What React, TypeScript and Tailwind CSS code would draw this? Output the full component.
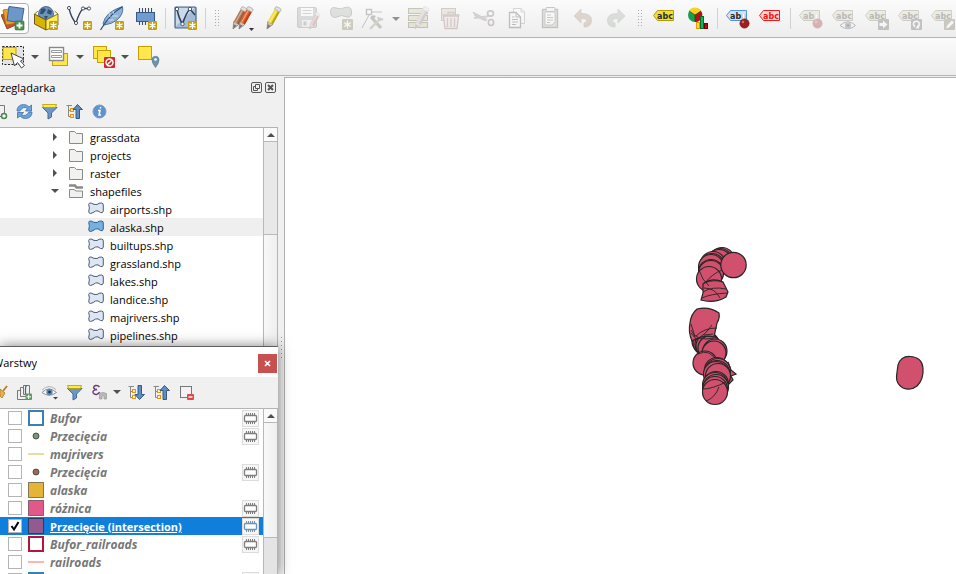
import React from "react";

type Kids = { children?: React.ReactNode };

/* ---------- shared pieces ---------- */

function Art({ children, faded = false }: Kids & { faded?: boolean }) {
  return (
    <svg width="25" height="25" viewBox="0 0 25 25" fill="none" className={faded ? "shrink-0 opacity-30" : "shrink-0"}>
      {children}
    </svg>
  );
}

function Tool({ label, faded, children }: Kids & { label: string; faded?: boolean }) {
  return (
    <button type="button" aria-label={label} disabled={faded} className="flex h-full w-[33px] shrink-0 items-center justify-center">
      <Art faded={faded}>{children}</Art>
    </button>
  );
}

function SmallTool({ label, children }: Kids & { label: string }) {
  return (
    <button type="button" aria-label={label} className="flex h-full w-[25px] shrink-0 items-center justify-center">
      <svg width="17" height="17" viewBox="0 0 17 17" fill="none" className="shrink-0">
        {children}
      </svg>
    </button>
  );
}

function Separator() {
  return (
    <div className="flex w-[7px] shrink-0 justify-center py-2">
      <div className="w-px bg-[#d2d2d2]" />
    </div>
  );
}

function Handle() {
  const rows = [0, 3, 6, 9, 12, 15];
  return (
    <div className="flex w-4 shrink-0 items-center justify-center">
      <svg width="5" height="17" fill="#a9a9a9">
        {rows.map((y) => (
          <g key={y}>
            <rect x="0" y={y} width="1" height="1" />
            <rect x="3" y={y} width="1" height="1" />
          </g>
        ))}
      </svg>
    </div>
  );
}

function DropArrow({ label, faded, className }: { label: string; faded?: boolean; className: string }) {
  return (
    <button type="button" aria-label={label} className={`flex h-full shrink-0 items-center justify-center ${className}`}>
      <svg width="8" height="4">
        <path d="M0 0H8L4 4Z" fill={faded ? "#909090" : "#505050"} />
      </svg>
    </button>
  );
}

function Star({ x = 15, y = 15, s = 1 }: { x?: number; y?: number; s?: number }) {
  return (
    <g transform={`translate(${x} ${y}) scale(${s})`}>
      <rect width="9" height="9" rx="1.3" fill="#c4a000" />
      <path d="M4.5 1V8M1.4 2.7L7.6 6.3M7.6 2.7L1.4 6.3" stroke="#fff" strokeWidth="1.3" />
    </g>
  );
}

function Pencil({ x, y, body, dark, tip = "#777" }: { x: number; y: number; body: string; dark: string; tip?: string }) {
  return (
    <g transform={`translate(${x} ${y}) rotate(29)`}>
      <path d="M0 0L-3 -7H3Z" fill="#d8c4a8" stroke="#777" strokeWidth=".6" />
      <path d="M0 0L-1.6 -4.5H1.6Z" fill={tip} />
      <rect x="-3" y="-21" width="6" height="14" fill={body} />
      <rect x="1" y="-21" width="2" height="14" fill={dark} />
      <path d="M-1 -21V-7" stroke="#fff" strokeOpacity=".45" />
      <path d="M-3 -21H3V-24Q0 -25 -3 -24Z" fill="#e2e2e2" stroke="#aaa" strokeWidth=".7" />
    </g>
  );
}

function Tag({ fill, stroke, color = "#2b2b2b", text = "abc" }: { fill: string; stroke: string; color?: string; text?: string }) {
  return (
    <g>
      <path d="M1.5 9.5L5.5 4.5H21.5V14.5H5.5Z" fill={fill} stroke={stroke} />
      <text x="5" y="12.5" fontSize="8" fontWeight="700" fontFamily="'DejaVu Sans', sans-serif" fill={color}>
        {text}
      </text>
    </g>
  );
}

function Ball() {
  return (
    <g>
      <path d="M18.5 8V14" stroke="#fff" strokeWidth="3.5" />
      <path d="M17 8V13M20 8V13" stroke="#999" strokeWidth=".7" />
      <circle cx="19.5" cy="17.5" r="4.6" fill="#9c2020" stroke="#7a1010" strokeWidth=".7" />
      <circle cx="18" cy="16" r="1.2" fill="#d47070" />
    </g>
  );
}

/* ---------- toolbars ---------- */

const V_LINE = "M2 2Q4 12 9 17Q12 7 16 2.5H22";

function MainToolbar() {
  const grey = { fill: "#d8d6a8", stroke: "#77755a" };
  return (
    <div role="toolbar" aria-label="Warstwy i edycja" className="flex h-[38px] overflow-hidden border-b border-[#b4b4b4] bg-linear-to-b from-[#fbfbfb] to-[#ededed]">
      <button type="button" aria-label="Zarządzanie źródłami danych" className="-ml-1 mr-px mt-[3px] flex h-[31px] w-[33px] shrink-0 items-center justify-end rounded-sm border border-[#b0b0b0] bg-white pr-[2px]">
        <Art>
          <path d="M0 9L10 5L17 18L6 23Z" fill="#c8522c" stroke="#8c3418" strokeWidth=".8" />
          <path d="M2 4L15 2L17 17L5 19Z" fill="#e8a02c" stroke="#a86c10" strokeWidth=".8" />
          <path d="M8 .5L23 2.5L20.5 17L6 14.5Z" fill="#6c97c8" stroke="#3a6496" />
          <rect x="14" y="15" width="9" height="9" rx="1" fill="#4f9150" stroke="#2f6a35" strokeWidth=".6" />
          <path d="M18.5 16.5V22.5M15.5 19.5H21.5" stroke="#fff" strokeWidth="1.8" />
        </Art>
      </button>
      <Tool label="Nowy GeoPackage">
        <circle cx="12" cy="8" r="7.5" fill="#6d93bd" stroke="#33587f" strokeWidth=".8" />
        <path d="M7 3Q11 1 12 4L9 8L6 8ZM14 3L18 5L17 9L13 7ZM10 10L14 10L12 14Z" fill="#2f5273" />
        <path d="M.5 8L12 14V24L.5 18Z" fill="#d9b300" stroke="#4a3e00" strokeWidth=".8" />
        <path d="M24 8L12 14V24L24 19Z" fill="#fcec54" stroke="#6a5a00" strokeWidth=".8" />
        <path d="M.5 8L4 5M24 8L20.5 5" stroke="#8f7a10" />
        <Star />
      </Tool>
      <Tool label="Nowa warstwa Shapefile">
        <path d={V_LINE} stroke="#35435a" strokeWidth="1.3" />
        {[[2, 2], [9, 17], [16, 2.5], [22, 2.5]].map(([x, y]) => (
          <circle key={x} cx={x} cy={y} r="1.6" fill="#fff" stroke="#35435a" strokeWidth=".9" />
        ))}
        <Star x={16} />
      </Tool>
      <Tool label="Nowa warstwa SpatiaLite">
        <path d="M3 18Q5 6 22.5 .5Q24 8 17 14Q12 18 4 19Z" fill="#8db3d9" stroke="#44698f" strokeWidth=".9" />
        <path d="M22 1Q10 8 .5 24" stroke="#2e5075" strokeWidth="1.2" />
        <path d="M9 7L10 11M13 5L14 8M8 14L14 14M12 10L18 10" stroke="#dbe9f6" strokeWidth=".8" />
        <Star />
      </Tool>
      <Tool label="Nowa tymczasowa warstwa">
        <path d="M6.5 2V19M9.5 2V19M12.5 2V19M15.5 2V19M18.5 2V19" stroke="#3c4f66" strokeWidth="1.1" />
        <rect x="3.5" y="6.5" width="18" height="9" fill="#6f9bd1" stroke="#345a8a" />
        <Star />
      </Tool>
      <Separator />
      <Tool label="Nowa warstwa wirtualna">
        <rect x="2" y="1" width="21" height="21" rx="1" fill="#a3bcd8" stroke="#44648a" strokeWidth="1.2" />
        <path d="M3 2H22L3 20Z" fill="#dbe6f2" fillOpacity=".7" />
        <path d="M4 3Q6 13 9.5 18Q13 7 17 3L22 9" stroke="#2f3e55" strokeWidth="1.5" />
        {[[4, 3], [9.5, 18], [17, 3]].map(([x, y]) => (
          <circle key={x} cx={x} cy={y} r="1.7" fill="#fff" stroke="#2f3e55" strokeWidth=".8" />
        ))}
        <Star />
      </Tool>
      <Separator />
      <Handle />
      <Tool label="Bieżące edycje">
        <Pencil x={4} y={23} body="#b5795a" dark="#8f5c42" />
        <Pencil x={10} y={23} body="#e8622c" dark="#b8431a" />
        <path d="M20 22H25L22.5 25Z" fill="#333" />
      </Tool>
      <Tool label="Tryb edycji">
        <Pencil x={5} y={23} body="#f2dc3c" dark="#b8a21c" />
      </Tool>
      <Tool label="Zapisz zmiany" faded>
        <rect x="2.5" y="1.5" width="19" height="20" rx="1.5" fill="#9a9fa3" stroke="#70757a" />
        <rect x="6" y="2" width="12" height="8" fill="#fff" />
        <path d="M7.5 4.5H16.5M7.5 7.5H16.5" stroke="#888" />
        <rect x="7" y="14" width="10" height="7" fill="#e8e8e8" />
        <rect x="8.5" y="15.5" width="3" height="4" fill="#777" />
        <g transform="translate(7 6) scale(.75)">
          <Pencil x={10} y={23} body="#c07a70" dark="#9a5a50" />
        </g>
      </Tool>
      <Tool label="Dodaj obiekt" faded>
        <path d="M2.5 6Q3 0 8 2Q13 4 17 1.5Q23 0 23.5 5Q24 12 19 11Q13 8 9 11Q3 13 2.5 6Z" fill="#a8b0a8" stroke="#5f6a5f" />
        <rect x="14" y="13" width="11" height="11" rx="1" fill="#7d7545" />
        <path d="M19.5 14.5V22.5M16 16.5L23 20.5M23 16.5L16 20.5" stroke="#fff" strokeWidth="1.3" />
        <circle cx="19.5" cy="18.5" r="1.8" fill="#fff" />
      </Tool>
      <Tool label="Edycja wierzchołków" faded>
        <path d="M8 9L1 22M11 6H21" stroke="#555" />
        <rect x="5.5" y="3.5" width="5" height="5" fill="#fff" stroke="#555" strokeWidth="1.4" />
        <path d="M11 12L20 22" stroke="#6e6a40" strokeWidth="3.2" />
        <path d="M9 12Q11 8 15 10L12 14Z" fill="#555" />
        <path d="M20 12L9 23" stroke="#888" strokeWidth="2.4" />
        <path d="M17 11Q18 15 22 13" stroke="#777" strokeWidth="2" />
      </Tool>
      <DropArrow label="Więcej narzędzi wierzchołków" faded className="w-[11px]" />
      <Tool label="Modyfikuj atrybuty" faded>
        {[2.5, 9.5, 16.5].map((y) => (
          <rect key={y} x="3.5" y={y} width="19" height="5" fill="#c9c790" stroke="#55532f" />
        ))}
        <Pencil x={10} y={23} body="#b0a0a0" dark="#8a7070" />
      </Tool>
      <Tool label="Usuń zaznaczone" faded>
        <rect x="3.5" y="2.5" width="14" height="12" fill="#cfcba8" stroke="#77705a" />
        <path d="M5.500 10H20.500L19 22.500H7Z" fill="#eadada" stroke="#8a6a64" strokeWidth="1.300" />
        <path d="M4.500 9H21.500M9.500 12V21M13 12V21M16.500 12V21M10 8V6.500H16V8" stroke="#8a6a64" strokeWidth="1.300" />
      </Tool>
      <Tool label="Wytnij" faded>
        <path d="M2 6L16 13.500L14.500 15L4 10Z" fill="#888" stroke="#666" strokeWidth=".7" />
        <path d="M3 12L16 10.500L18 9" stroke="#888" strokeWidth="2.200" />
        <ellipse cx="19.500" cy="7.500" rx="3" ry="2.600" stroke="#77606a" strokeWidth="1.700" />
        <ellipse cx="20" cy="16.500" rx="2.600" ry="3" stroke="#77606a" strokeWidth="1.700" />
      </Tool>
      <Tool label="Kopiuj" faded>
        <path d="M9.500 2.500H17L20.500 6V17.500H9.500Z" fill="#fff" stroke="#888" />
        <path d="M17 2.500V6H20.500" stroke="#888" />
        <path d="M5.500 6.500H12L16.500 11V21.500H5.500Z" fill="#fff" stroke="#444" strokeWidth="1.300" />
        <path d="M12 6.500V11H16.500M8 11H10.500M8 13.500H14M8 16H14M8 18.500H12" stroke="#444" />
      </Tool>
      <Tool label="Wklej" faded>
        <rect x="5.500" y="3.500" width="15" height="18" fill="#b5b5aa" stroke="#555" strokeWidth="1.300" />
        <path d="M8 6H18V16L15 19H8Z" fill="#fff" stroke="#555" strokeWidth=".8" />
        <rect x="9" y="1.500" width="9" height="4" rx="1" fill="#eee" stroke="#555" />
        <path d="M10 9H14M10 11.500H16M10 14H16M10 16.500H13" stroke="#666" />
      </Tool>
      <Tool label="Cofnij" faded>
        <path d="M4 10L11 3V7.500Q22 7 21.500 15Q21 21 14 21V17Q17 17 16.500 14.500Q15.500 12 11 12.500V17Z" fill="#a88d74" stroke="#8c705a" strokeWidth=".7" />
      </Tool>
      <Tool label="Ponów" faded>
        <path d="M22 10L15 3V7.500Q4 7 4.500 15Q5 21 12 21V17Q9 17 9.500 14.500Q10.500 12 15 12.500V17Z" fill="#9fa8a0" stroke="#7c887e" strokeWidth=".7" />
      </Tool>
      <Handle />
      <Tool label="Opcje etykiet warstwy">
        <Tag fill="#f3de38" stroke="#b39b00" />
      </Tool>
      <Tool label="Opcje diagramów warstwy">
        <circle cx="10" cy="9" r="7" fill="#12a150" />
        <path d="M10 9L4 5A7 7 0 0 1 16 5Z" fill="#f9d41c" />
        <path d="M10 9L16 5A7 7 0 0 1 10 16Z" fill="#c00c0c" />
        <path d="M10 16V9L4 5M10 9L16 5" stroke="#35400f" strokeWidth=".7" />
        <rect x="11.500" y="16.500" width="3" height="6" fill="#ffe040" stroke="#f09800" />
        <rect x="15.500" y="10.500" width="3" height="12" fill="#15b35c" stroke="#066b30" />
        <rect x="19.500" y="17.500" width="3" height="5" fill="#b51010" stroke="#700" />
      </Tool>
      <Separator />
      <Tool label="Podświetl przypięte etykiety">
        <Tag fill="#cfe4fb" stroke="#4a94e0" text="ab" />
        <Ball />
      </Tool>
      <Tool label="Nieumieszczone etykiety">
        <Tag fill="#ffd6d6" stroke="#f01818" color="#f01010" />
      </Tool>
      <Separator />
      <Tool label="Przypnij etykiety" faded>
        <Tag {...grey} text="ab" />
        <Ball />
      </Tool>
      <Tool label="Pokaż lub ukryj etykiety" faded>
        <Tag {...grey} />
        <path d="M9 19.500Q17 12 24.500 19.500Q17 26 9 19.500Z" fill="#fff" stroke="#333" />
        <circle cx="17" cy="19.500" r="3.200" fill="#5a6a80" />
        <circle cx="17" cy="19.500" r="1.300" fill="#111" />
      </Tool>
      <Tool label="Przesuń etykietę" faded>
        <Tag {...grey} />
        <rect x="14" y="13" width="11" height="11" rx="1" fill="#555" />
        <path d="M15.500 17H19V14.500L23.500 18.500L19 22.500V20H15.500Z" fill="#fff" />
      </Tool>
      <Tool label="Obróć etykietę" faded>
        <Tag {...grey} />
        <rect x="14" y="13" width="11" height="11" rx="1" fill="#555" />
        <path d="M18 21Q15 18 17.500 15.800Q20 14.500 22 16.500Q23 19 21 21" stroke="#fff" strokeWidth="1.600" />
        <path d="M18.500 22.500L22.500 22.500L21 18.500Z" fill="#fff" />
      </Tool>
      <Tool label="Zmień właściwości etykiety" faded>
        <Tag {...grey} />
        <rect x="14" y="13" width="11" height="11" rx="1" fill="#6c6a50" />
        <path d="M16 22.500L17 19.500L22 14.500L24 16.500L19 21.500Z" fill="#fff" />
      </Tool>
    </div>
  );
}

function SelectTool({ label, children }: Kids & { label: string }) {
  return (
    <button type="button" aria-label={label} className="flex h-full w-[27px] shrink-0 items-center justify-center">
      <svg width="25" height="25" viewBox="0 0 25 25" fill="none">
        {children}
      </svg>
    </button>
  );
}

function SelectionToolbar() {
  const yellow = { fill: "#fee64c", stroke: "#c4a000" };
  return (
    <div role="toolbar" aria-label="Selekcja" className="flex h-[38px] gap-[3px] border-b border-[#b4b4b4] bg-linear-to-b from-[#fbfbfb] to-[#ededed]">
      <div className="flex">
        <SelectTool label="Wybierz obiekty">
          <rect x="1.500" y="2.500" width="21" height="18" fill="#e2e4e8" stroke="#222" strokeDasharray="2 1.500" />
          <rect x="2" y="3.500" width="13" height="12" {...yellow} />
          <path d="M10 9L13.500 22L16.500 18.500L20.500 24L23.500 21.500L19.500 17L23 15Z" fill="#fff" stroke="#444" />
        </SelectTool>
        <DropArrow label="Tryby wyboru" className="w-[15px]" />
      </div>
      <div className="flex">
        <SelectTool label="Wybierz według wartości">
          <rect x="6.500" y="9.500" width="15" height="12" {...yellow} />
          <rect x="3.500" y="3.500" width="14" height="13" fill="#fff" stroke="#888" strokeWidth="1.400" />
          <path d="M5.500 6.500H15.500V8.500H5.500ZM5.500 11.500H15.500V13.500H5.500Z" fill="#fff" stroke="#999" />
        </SelectTool>
        <DropArrow label="Opcje wyboru" className="w-[15px]" />
      </div>
      <div className="flex">
        <SelectTool label="Odznacz obiekty">
          <rect x="2.500" y="2.500" width="13" height="12" {...yellow} />
          <rect x="6.500" y="6.500" width="13" height="12" {...yellow} />
          <rect x="13" y="13" width="11" height="11" rx="1" fill="#d3272c" />
          <circle cx="18.500" cy="18.500" r="3.500" stroke="#fff" strokeWidth="1.400" />
          <path d="M16 21L21 16" stroke="#fff" strokeWidth="1.400" />
        </SelectTool>
        <DropArrow label="Opcje odznaczania" className="w-[15px]" />
      </div>
      <SelectTool label="Wybierz według lokalizacji">
        <rect x="2.500" y="2.500" width="13" height="13" {...yellow} />
        <path d="M19.500 23.500Q16 19 16 15.800A3.500 3.500 0 0 1 23 15.800Q23 19 19.500 23.500Z" fill="#6f93ab" stroke="#54788f" strokeWidth=".7" />
        <circle cx="19.500" cy="15.500" r="1.300" fill="#fff" />
      </SelectTool>
    </div>
  );
}

/* ---------- icons shared by both panels ---------- */

function FunnelArt() {
  return (
    <g>
      <path d="M1.500 4.500L7 10V16L10.500 14V10L16 4.500Z" fill="#6c97c8" stroke="#3f6c9e" />
      <path d="M1.500 1.500H15.500L14.500 4.500H2.500Z" fill="#fcec3e" stroke="#b7a000" strokeWidth=".8" />
    </g>
  );
}

function TreeArrowArt({ down = false }: { down?: boolean }) {
  return (
    <g>
      <path d="M.5 2.500H6M2.500 2.500V13.500H5M2.500 7.500H5" stroke="#888" />
      <rect x="4.500" y="5.500" width="3" height="3" fill="#fff3c8" stroke="#e8940c" />
      <rect x="4.500" y="11.500" width="3" height="3" fill="#fff3c8" stroke="#e8940c" />
      <path
        d={down ? "M11.500 15.500L7 10.500H10V1.500H13.500V10.500H16.500Z" : "M11.500 1.500L7 6.500H10V15.500H13.500V6.500H16.500Z"}
        fill="#5d8fc4"
        stroke="#2c4e74"
        strokeWidth=".9"
      />
    </g>
  );
}

function Chip({ active }: { active?: boolean }) {
  const color = active ? "#6f93b5" : "#7d7d7d";
  return (
    <button type="button" aria-label="Tymczasowa warstwa robocza" className="flex size-[17px] shrink-0 items-center justify-center border border-[#dcdcdc] bg-[#f6f6f6]">
      <svg width="15" height="13" viewBox="0 0 15 13" fill="none" stroke={color} className="shrink-0">
        <path d="M3.500 1V3M5.500 1V3M7.500 1V3M9.500 1V3M11.500 1V3M3.500 10V12M5.500 10V12M7.500 10V12M9.500 10V12M11.500 10V12" />
        <rect x="1.500" y="3.500" width="12" height="6" rx="1" fill="#fff" strokeWidth="1.300" />
      </svg>
    </button>
  );
}

function ScrollUp() {
  return (
    <button type="button" aria-label="Przewiń w górę" className="flex h-[14px] w-full shrink-0 items-center justify-center border-b border-[#b8b8b8] bg-[#fafafa]">
      <svg width="8" height="4">
        <path d="M0 4H8L4 0Z" fill="#505050" />
      </svg>
    </button>
  );
}

/* ---------- browser panel ---------- */

const folders = ["grassdata", "projects", "raster", "shapefiles"];
const files = ["airports.shp", "alaska.shp", "builtups.shp", "grassland.shp", "lakes.shp", "landice.shp", "majrivers.shp", "pipelines.shp"];

function FolderRow({ name }: { name: string }) {
  const open = name === "shapefiles";
  return (
    <li role="treeitem" aria-expanded={open} className="flex h-[18px] items-center pl-[50px]">
      <svg width="10" height="10" className="mr-2 shrink-0">
        <path d={open ? "M1 3H9L5 7Z" : "M3 1V9L7 5Z"} fill="#505050" />
      </svg>
      <svg width="16" height="14" viewBox="0 0 16 14" fill="#f1f1ef" stroke="#8a8a86" className="mr-[6px] shrink-0">
        {open ? (
          <g>
            <path d="M1 1.500H7L8.500 3.500H15" strokeWidth="2.400" fill="none" />
            <path d="M1.500 5.500H6L8 7H14.500V13.500H1.500Z" />
          </g>
        ) : (
          <path d="M1.500 1.500H6.500L8.500 3.500H14.500V13.500H1.500Z" />
        )}
      </svg>
      <span className="pt-[2px]">{name}</span>
    </li>
  );
}

function FileRow({ name }: { name: string }) {
  const selected = name === "alaska.shp";
  return (
    <li role="treeitem" aria-selected={selected} className={`flex h-[18px] items-center pl-[88px] ${selected ? "bg-[#efefef]" : ""}`}>
      <svg width="16" height="13" viewBox="0 0 16 13" className="mb-[2px] mr-[6px] shrink-0">
        <path
          d="M.7 2.500Q1 .6 3 1Q6 3 9 2.500Q11 .8 13.500 1Q15.700 1 15.300 4V9Q15 11.500 12.500 10.500Q10 8 7.500 9Q5 11 2.500 11.500Q.5 11.500 .8 9Q2 6 .7 2.500Z"
          fill={selected ? "#74b0e0" : "#dde6f2"}
          stroke={selected ? "#2e6396" : "#4a5c74"}
        />
      </svg>
      <span className="pt-[2px]">{name}</span>
    </li>
  );
}

function BrowserPanel() {
  return (
    <section aria-label="Przeglądarka" className="flex h-[270px] shrink-0 flex-col overflow-hidden">
      <header className="flex h-[22px] items-center justify-between pr-[2px]">
        <h2 className="whitespace-nowrap pt-[2px]">zeglądarka</h2>
        <div className="flex gap-[3px]">
          <button type="button" aria-label="Odepnij">
            <svg width="11" height="11" viewBox="0 0 11 11" fill="none" stroke="#555">
              <rect x=".5" y=".5" width="10" height="10" rx="1.500" />
              <path d="M4.500 2.500H8.500V6.500H4.500ZM4 4.500H2.500V8.500H6.500V7" />
            </svg>
          </button>
          <button type="button" aria-label="Zamknij przeglądarkę">
            <svg width="11" height="11" viewBox="0 0 11 11" fill="none" stroke="#555">
              <rect x=".5" y=".5" width="10" height="10" rx="1.500" />
              <path d="M3 3L8 8M8 3L3 8" strokeWidth="2" />
            </svg>
          </button>
        </div>
      </header>
      <div role="toolbar" aria-label="Narzędzia przeglądarki" className="flex h-[29px] shrink-0 pb-[3px]">
        <button type="button" aria-label="Dodaj wybrane warstwy" className="flex w-3 items-center">
          <svg width="8" height="17" viewBox="0 0 8 17" fill="none">
            <path d="M0 2.500H4.500V11M0 13.500H1" stroke="#777" />
            <circle cx="4" cy="13" r="2.500" fill="#fff" stroke="#3f8a4a" strokeWidth="1.500" />
          </svg>
        </button>
        <SmallTool label="Odśwież">
          <path d="M1 8Q1 2 7.500 1.500Q11 1.500 13 4L15.500 2V8H9.500L11.500 5.500Q7 2.500 4 8Z" fill="#6fa3dc" stroke="#3b70aa" strokeWidth=".8" />
          <path d="M16 9Q16 15 9.500 15.500Q6 15.500 4 13L1.500 15V9.500H7.500L5.500 12Q10 14 13 9Z" fill="#6fa3dc" stroke="#3b70aa" strokeWidth=".8" />
        </SmallTool>
        <SmallTool label="Filtruj"><FunnelArt /></SmallTool>
        <SmallTool label="Zwiń wszystko"><TreeArrowArt /></SmallTool>
        <SmallTool label="Właściwości">
          <circle cx="8.500" cy="8.500" r="6.500" fill="#5f93cf" stroke="#7f9dbd" />
          <path d="M9.500 4V5.500M7 7.500H9L8 12H10" stroke="#fff" strokeWidth="1.500" />
        </SmallTool>
      </div>
      <div className="flex min-h-0 flex-1 border-r border-t border-[#b4b4b4] bg-white">
        <ul role="tree" className="min-w-0 flex-1">
          {folders.map((name) => <FolderRow key={name} name={name} />)}
          {files.map((name) => <FileRow key={name} name={name} />)}
        </ul>
        <div className="flex w-[14px] shrink-0 flex-col border-l border-[#b8b8b8] bg-[#e8e8e8]">
          <ScrollUp />
          <div className="h-[93px] border-b border-[#b8b8b8]" />
          <div className="flex-1 bg-linear-to-r from-[#f8f8f8] to-[#efefef]" />
        </div>
      </div>
    </section>
  );
}

/* ---------- layers panel ---------- */

type Layer = { name?: string; kind: "fill" | "outline" | "dot" | "line"; color: string; chip?: boolean; active?: boolean };

const layers: Layer[] = [
  { name: "Bufor", kind: "outline", color: "#3d7eb5", chip: true },
  { name: "Przecięcia", kind: "dot", color: "#6f9c72", chip: true },
  { name: "majrivers", kind: "line", color: "#e8dca0" },
  { name: "Przecięcia", kind: "dot", color: "#a0694f", chip: true },
  { name: "alaska", kind: "fill", color: "#e3b437" },
  { name: "różnica", kind: "fill", color: "#e2588a", chip: true },
  { name: "Przecięcie (intersection)", kind: "fill", color: "#925a8e", chip: true, active: true },
  { name: "Bufor_railroads", kind: "outline", color: "#b8143a", chip: true },
  { name: "railroads", kind: "line", color: "#f7b9ad" },
  { kind: "outline", color: "#3d7eb5", chip: true },
];

function Swatch({ kind, color }: Layer) {
  return (
    <svg width="16" height="16" viewBox="0 0 16 16" className="mr-[6px] shrink-0">
      {kind === "fill" && <rect x=".5" y=".5" width="15" height="15" fill={color} stroke="#000" strokeOpacity=".45" />}
      {kind === "outline" && <rect x="1" y="1" width="14" height="14" fill="#fff" stroke={color} strokeWidth="2" />}
      {kind === "dot" && <circle cx="8" cy="8" r="3" fill={color} stroke="#3a3a3a" strokeOpacity=".8" />}
      {kind === "line" && <rect y="7" width="16" height="2" fill={color} />}
    </svg>
  );
}

function LayerRow({ layer }: { layer: Layer }) {
  return (
    <li className={`flex h-[18px] shrink-0 items-center pl-2 pr-1 ${layer.active ? "bg-[#0f7fdb]" : ""}`}>
      <label className="flex min-w-0 flex-1 items-center">
        <span className="relative mr-[6px] flex size-[14px] shrink-0">
          <input
            type="checkbox"
            aria-label={layer.name ? undefined : "Warstwa bez nazwy"}
            defaultChecked={layer.active}
            className="size-[14px] appearance-none border border-[#b4b4b4] bg-white"
          />
          {layer.active && (
            <svg width="14" height="14" viewBox="0 0 14 14" className="pointer-events-none absolute inset-0">
              <path d="M3.500 7L6 10.500L10.500 3" fill="none" stroke="#000" strokeWidth="2" />
            </svg>
          )}
        </span>
        <Swatch {...layer} />
        {layer.name && (
          <span className={`whitespace-nowrap pt-[2px] font-bold ${layer.active ? "text-white underline" : "text-[12px] italic text-[#777777]"}`}>{layer.name}</span>
        )}
      </label>
      {layer.chip && <Chip active={layer.active} />}
    </li>
  );
}

function LayersPanel() {
  return (
    <section aria-label="Warstwy" className="relative z-10 flex min-h-0 flex-1 flex-col border-t border-[#606060] bg-[#f0f0f0] shadow-[0_0_12px_rgba(0,0,0,0.5)]">
      <header className="flex h-[30px] shrink-0 items-center justify-between bg-white pr-px">
        <h2 className="flex w-[37px] justify-end overflow-hidden whitespace-nowrap pt-[2px]">Warstwy</h2>
        <button type="button" aria-label="Zamknij warstwy" className="mt-[2px] flex size-[19px] items-center justify-center bg-[#c75050]">
          <svg width="7" height="7" viewBox="0 0 7 7">
            <path d="M1 1L6 6M6 1L1 6" stroke="#fff" strokeWidth="1.600" />
          </svg>
        </button>
      </header>
      <div role="toolbar" aria-label="Narzędzia warstw" className="flex h-[31px] shrink-0 pb-px">
        <button type="button" aria-label="Styl warstwy" className="flex w-3 items-center">
          <svg width="8" height="16" viewBox="0 0 8 16">
            <path d="M7 2L3 7" stroke="#b87d2a" strokeWidth="1.800" />
            <path d="M0 5L5 9L2 14L0 12Z" fill="#e6b450" stroke="#b07a20" strokeWidth=".8" />
          </svg>
        </button>
        <SmallTool label="Dodaj grupę">
          <path d="M4.500 6.500H1.500V15.500H10M7.500 3.500H4.500V12.500H12.500M7.500 1.500H13.500V10.500H7.500Z" stroke="#777" />
          <path d="M9.500 10V5Q9.500 1.500 11 2" stroke="#3c6795" strokeWidth="1.200" />
          <rect x="9.500" y="9.500" width="6.500" height="6.500" rx="1" fill="#5c9a62" />
          <path d="M12.700 10.700V15M10.500 12.800H15" stroke="#fff" />
        </SmallTool>
        <SmallTool label="Widoczność warstw">
          <path d="M1 8.500Q8 1.500 15.500 8.500Q8 14 1 8.500Z" fill="#f5f8fb" stroke="#8a9098" />
          <path d="M1 6Q8 -.5 15 5.500" stroke="#b0b0b0" />
          <circle cx="8.500" cy="8" r="3.200" fill="#5d88b8" />
          <circle cx="8.500" cy="8" r="1.300" fill="#1e2c40" />
          <path d="M12 13H17L14.500 15.500Z" fill="#444" />
        </SmallTool>
        <SmallTool label="Filtruj legendę"><FunnelArt /></SmallTool>
        <SmallTool label="Filtruj wyrażeniem">
          <path d="M8.500 3Q7 1 4.500 1.500Q2 2.500 3 4.500Q4 6 6 5.500Q1.500 6 2 8.500Q3 11 6 10.200Q8 9.500 8.500 8" stroke="#6b3f78" strokeWidth="1.500" />
          <path d="M8.500 9.500Q12 7.500 15.500 9.500V15H13V12Q12 11 11 12V15H8.500Z" fill="#b9b9b9" stroke="#9a9a9a" strokeWidth=".7" />
        </SmallTool>
        <DropArrow label="Opcje filtra" className="mr-[2px] w-[10px]" />
        <SmallTool label="Rozwiń wszystko"><TreeArrowArt down /></SmallTool>
        <SmallTool label="Zwiń wszystkie warstwy"><TreeArrowArt /></SmallTool>
        <SmallTool label="Usuń warstwę">
          <rect x="2.500" y="2.500" width="11" height="11" fill="#f2f2f2" stroke="#777" />
          <rect x="9" y="10" width="7" height="6" rx="1" fill="#e04848" />
          <path d="M10.500 13H14.500" stroke="#fff" strokeWidth="1.400" />
        </SmallTool>
      </div>
      <div className="flex min-h-0 flex-1 overflow-hidden border-r border-t border-[#b4b4b4] bg-white">
        <ul className="flex min-w-0 flex-1 flex-col overflow-hidden">
          {layers.map((layer, i) => <LayerRow key={i} layer={layer} />)}
        </ul>
        <div className="flex w-[14px] shrink-0 flex-col border-l border-[#b8b8b8] bg-[#e4e4e4]">
          <ScrollUp />
          <div className="h-[115px] border-b border-[#b8b8b8] bg-linear-to-r from-[#f8f8f8] to-[#efefef]" />
        </div>
      </div>
    </section>
  );
}

/* ---------- map ---------- */

const north = [[722, 260], [720, 261], [719, 262], [713, 264], [712, 266], [711, 267], [711, 272], [711, 273], [709, 279]];
const middle = [[704, 341], [705, 343], [707, 344], [708, 346], [710, 348], [715, 351], [714, 353], [705, 363]];
const south = [[717, 370], [718, 371], [717, 373], [716, 374], [718, 376], [716, 384], [715, 385], [716, 387], [715, 389], [715, 392]];

function MapCanvas() {
  const dots = (list: number[][], r: number) => list.map(([x, y], i) => <circle key={i} cx={x} cy={y} r={r} />);
  return (
    <main className="min-w-0 flex-1 overflow-hidden border-l border-t border-[#b0b0b0] bg-white">
      <svg className="size-full" role="img" aria-label="Mapa">
        <g transform="translate(-285 -78)" fill="#d0506e" stroke="#262626" strokeWidth="1.2">
          {dots(north, 12.5)}
          <path d="M703 284Q712 277 723 282L728 292L726 297Q714 304 701 300L703 293Z" />
          <path d="M702 298Q710 294 727 293M703 292Q712 286 726 289M704 288Q715 288 720 298M704 283Q714 279 723 282" fill="none" strokeWidth=".9" />
          <path d="M699 270Q702 280 709 286M705 283Q712 274 722 270" fill="none" strokeWidth=".9" />
          <circle cx="733.5" cy="265" r="12.7" />
          {dots(middle.slice(0, 5), 12)}
          <path d="M697 309Q709 306 719 313Q720 318 717 323L714 337Q704 334 692 341Q688 332 690 323Q691 314 697 309Z" />
          <path d="M691 324L695 337M691 333L697 340M696 336Q704 328 717 328M699 338Q706 334 712 325M704 335L713 334M691 330Q696 342 714 338" fill="none" strokeWidth=".9" />
          {dots(middle.slice(5), 12)}
          <path d="M698 354Q710 348 717 362" fill="none" strokeWidth=".9" />
          <path d="M728 362L731 370L736 374L731 376L733 380L728 385Z" />
          {dots(south, 12.5)}
          <path d="M703 389Q712 389 726 382M719 387Q715 398 706 401" fill="none" strokeWidth=".9" />
          <path d="M898 365Q901 356 910 356.5Q922 357 923 368Q924 379 917 386Q911 391 903 388Q896 384 896.5 376Z" />
        </g>
      </svg>
    </main>
  );
}

export default function App() {
  return (
    <div className="flex h-screen flex-col overflow-hidden bg-[#f0f0f0] font-['Open_Sans','Noto_Sans',sans-serif] text-[11px] leading-[18px] text-black">
      <MainToolbar />
      <SelectionToolbar />
      <div className="flex min-h-0 flex-1">
        <aside className="flex w-[278px] shrink-0 flex-col">
          <BrowserPanel />
          <LayersPanel />
        </aside>
        <div className="flex w-[6px] shrink-0 items-center justify-center pt-12">
          <svg width="3" height="24" fill="#999">
            {[0, 4, 8, 12, 16, 20].map((y) => <rect key={y} x="1" y={y} width="1" height="1" />)}
          </svg>
        </div>
        <div className="flex min-w-0 flex-1 pt-px">
          <MapCanvas />
        </div>
      </div>
    </div>
  );
}
